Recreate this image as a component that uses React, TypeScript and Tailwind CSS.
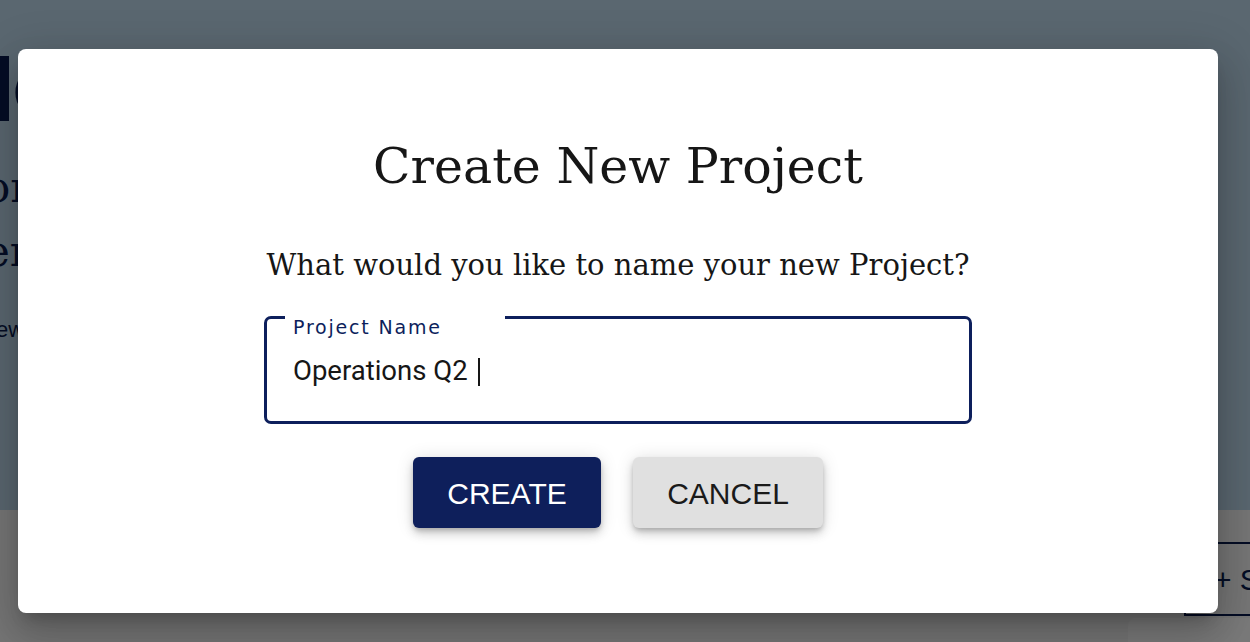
import { useState } from "react";

export default function App() {
  const [name, setName] = useState("Operations Q2");

  return (
    <div className="relative h-[642px] w-[1250px] overflow-hidden bg-white">
      {/* Page behind the dialog */}
      <div className="flex h-[510px] flex-col bg-[#b5cee0] pt-[56px]">
        <div className="flex items-start gap-[3px]">
          <div className="h-[65px] w-[9px] bg-[#0a1a4a]" />
          <span className="mt-[8px] text-[60px] leading-none text-[#0a1a4a] [font-family:'DejaVu_Serif',serif]">
            Co
          </span>
        </div>
        <p className="-ml-[15px] mt-[43px] text-[42px] leading-none text-[#0a1a4a] [font-family:'DejaVu_Serif',serif]">
          or your team
        </p>
        <p className="-ml-[15px] mt-[22px] text-[42px] leading-none text-[#0a1a4a] [font-family:'DejaVu_Serif',serif]">
          ery project
        </p>
        <p className="-ml-[4px] mt-[46px] text-[22px] leading-none text-[#0a1a4a] [font-family:'Liberation_Sans',sans-serif]">
          ew projects
        </p>
      </div>
      <div className="relative h-[132px] bg-[#ececec]">
        <div className="absolute left-[1184px] top-[32px] flex h-[74px] w-[200px] items-center border-2 border-[#0a1a4a] pl-[28px] text-[30px] text-[#0a1a4a] [font-family:'Liberation_Sans',sans-serif]">
          + Start
        </div>
        <div className="absolute left-[1128px] top-[108px] h-[60px] w-[200px] rounded-lg bg-[#f4f4f4]" />
      </div>

      {/* Overlay + dialog */}
      <div className="absolute inset-0 flex items-start bg-black/50 pl-[18px] pt-[49px]">
        <div className="flex h-[564px] w-[1200px] flex-col items-center rounded-lg bg-white pt-[88px] shadow-[0_11px_15px_-7px_rgba(0,0,0,0.2),0_24px_38px_3px_rgba(0,0,0,0.14),0_9px_46px_8px_rgba(0,0,0,0.12)]">
          <h1 className="text-[49px] leading-[60px] text-[#161616] [font-family:'DejaVu_Serif',serif]">
            Create New Project
          </h1>
          <p className="mt-[50px] text-[29px] leading-[36px] text-[#161616] [font-family:'DejaVu_Serif',serif]">
            What would you like to name your new Project?
          </p>

          <div className="relative mt-[33px] h-[108px] w-[708px] rounded-[7px] border-[3px] border-[#0d1f5c]">
            <span className="absolute -top-[3px] left-[18px] h-[3px] w-[220px] bg-white" />
            <label className="absolute left-[26px] top-[-3px] text-[19px] leading-[22px] tracking-[1.8px] text-[#0d1f5c] [font-family:'DejaVu_Sans',sans-serif]">
              Project Name
            </label>
            <input
              value={name}
              onChange={(e) => setName(e.target.value)}
              className="absolute left-[26px] top-[35px] w-[600px] bg-transparent text-[27.5px] leading-[34px] text-[#161616] outline-none [font-family:Roboto,sans-serif]"
            />
            <span className="absolute left-[211px] top-[39px] h-[28px] w-[2px] bg-[#161616]" />
          </div>

          <div className="mt-[33px] flex gap-[32px] [font-family:'Liberation_Sans',sans-serif]">
            <button className="h-[71px] w-[188px] rounded-[6px] bg-[#0e1f5b] pt-[2px] text-[30px] text-white shadow-[0_3px_5px_-1px_rgba(0,0,0,0.2),0_6px_10px_0_rgba(0,0,0,0.14),0_1px_18px_0_rgba(0,0,0,0.12)]">
              CREATE
            </button>
            <button className="h-[71px] w-[190px] rounded-[6px] bg-[#e0e0e0] pt-[2px] text-[30px] text-[#1a1a1a] shadow-[0_3px_5px_-1px_rgba(0,0,0,0.2),0_6px_10px_0_rgba(0,0,0,0.14),0_1px_18px_0_rgba(0,0,0,0.12)]">
              CANCEL
            </button>
          </div>
        </div>
      </div>
    </div>
  );
}
